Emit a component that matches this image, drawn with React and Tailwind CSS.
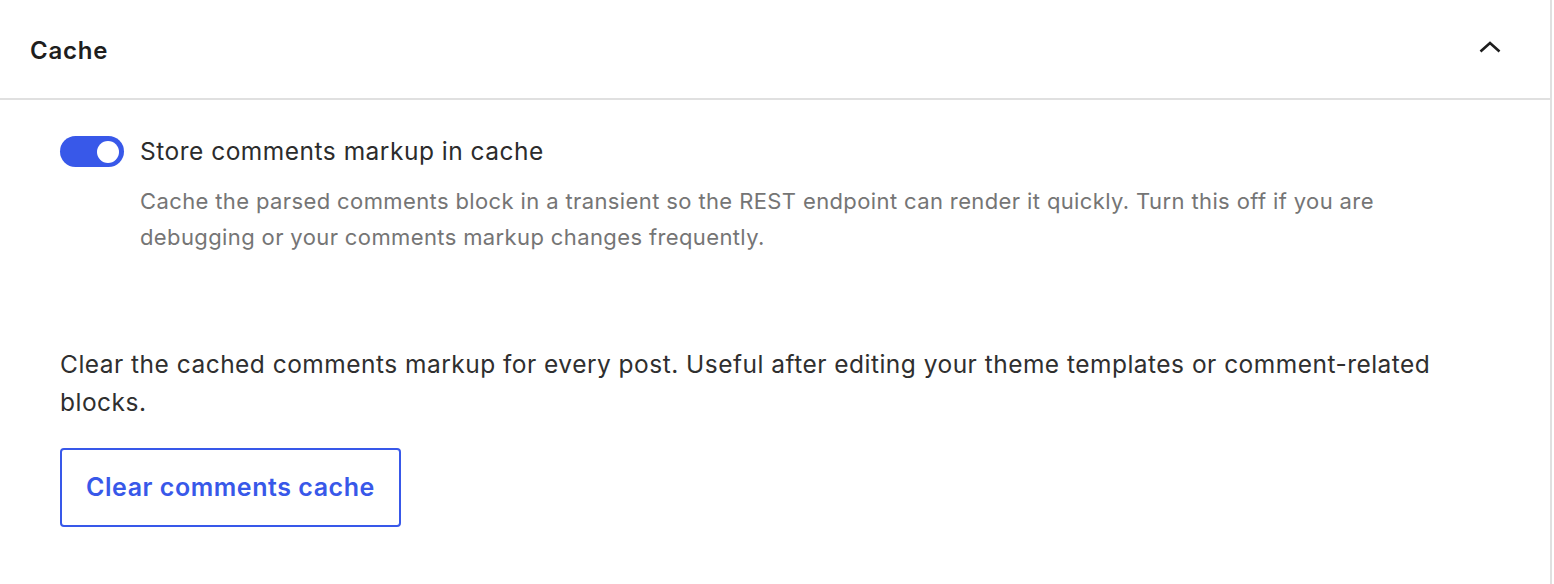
import React, { useState } from "react";

export default function App() {
    const [enabled, setEnabled] = useState(true);

    return (
        <div className="w-[1554px] h-[584px] bg-white font-['Inter',sans-serif] text-[#1e1e1e] overflow-hidden">
            <div className="w-[1552px] h-full border-r-2 border-[#e0e0e0]">
                {/* Panel header */}
                <div className="h-[100px] flex items-center justify-between pl-[30px] pr-[49px] pt-[4px] border-b-2 border-[#e0e0e0]">
                    <h2 className="text-[24px] font-semibold tracking-[0.8px]">Cache</h2>
                    <svg width="22" height="13" viewBox="0 0 22 13" className="-mt-[9px]">
                        <path d="M1.5 11.5 11 3l9.5 8.5" fill="none" stroke="#1e1e1e" strokeWidth="2.6" />
                    </svg>
                </div>

                <div className="pl-[60px] pr-[60px]">
                    {/* Toggle row */}
                    <div className="flex items-start gap-[16px] pt-[35px]">
                        <button
                            onClick={() => setEnabled(!enabled)}
                            className={`relative w-[64px] h-[31px] rounded-full shrink-0 mt-[1px] ${enabled ? "bg-[#3858e9]" : "bg-[#949494]"}`}
                        >
                            <span
                                className={`absolute top-[4.5px] w-[22px] h-[22px] rounded-full bg-white ${enabled ? "left-[37px]" : "left-[5px]"}`}
                            />
                        </button>
                        <div>
                            <div className="text-[24.5px] leading-[32px] tracking-[0.5px] text-[#2c2c2c]">Store comments markup in cache</div>
                            <p className="mt-[16px] text-[22px] leading-[36px] tracking-[0.38px] text-[#757575] max-w-[1320px]">
                                Cache the parsed comments block in a transient so the REST endpoint can render it quickly. Turn this off if you are debugging or your comments markup changes frequently.
                            </p>
                        </div>
                    </div>

                    {/* Clear cache */}
                    <p className="mt-[90px] text-[24.5px] leading-[38px] tracking-[0.48px] text-[#2f2f2f] max-w-[1420px]">
                        Clear the cached comments markup for every post. Useful after editing your theme templates or comment-related blocks.
                    </p>
                    <button className="mt-[27px] h-[79px] px-[24px] border-2 border-[#3858e9] rounded-[4px] text-[25px] font-semibold tracking-[0.55px] text-[#3858e9]">
                        Clear comments cache
                    </button>
                </div>
            </div>
        </div>
    );
}
